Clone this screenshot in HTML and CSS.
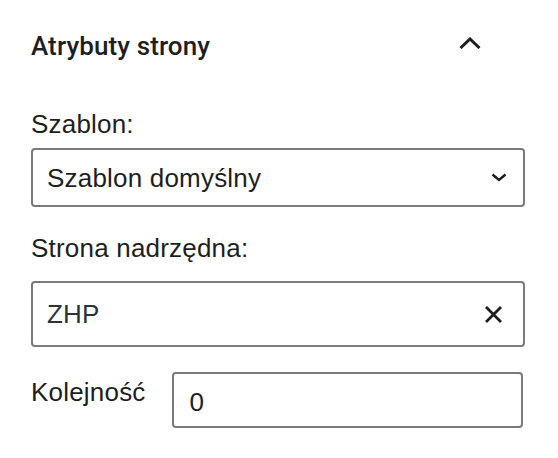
FILE: index.html
```html
<!DOCTYPE html>
<html lang="pl">
<head>
<meta charset="utf-8">
<title>Atrybuty strony</title>
<link rel="stylesheet" href="styles.css">
</head>
<body>
<section class="panel">
  <header class="panel-head">
    <h2 class="panel-title">Atrybuty strony</h2>
    <svg class="icon-up" width="22" height="12" viewBox="0 0 22 12" aria-hidden="true">
      <path d="M1.5 11 L11 2 L20.5 11" fill="none" stroke="#1e1e1e" stroke-width="3"/>
    </svg>
  </header>

  <div class="field">
    <label class="label">Szablon:</label>
    <div class="control select">
      <span class="value">Szablon domyślny</span>
      <svg class="icon-down" width="16" height="9" viewBox="0 0 16 9" aria-hidden="true">
        <path d="M1.5 1.5 L8 7 L14.5 1.5" fill="none" stroke="#1e1e1e" stroke-width="2.4"/>
      </svg>
    </div>
  </div>

  <div class="field field-parent">
    <label class="label">Strona nadrzędna:</label>
    <div class="control combo">
      <span class="value value-zhp">ZHP</span>
      <svg class="icon-x" width="19" height="19" viewBox="0 0 19 19" aria-hidden="true">
        <path d="M2 2 L17 17 M17 2 L2 17" fill="none" stroke="#1e1e1e" stroke-width="2.8"/>
      </svg>
    </div>
  </div>

  <div class="order-row">
    <label class="label order-label">Kolejność</label>
    <div class="control order-input">
      <span class="value">0</span>
    </div>
  </div>
</section>
</body>
</html>
```

FILE: styles.css
```css
* { box-sizing: border-box; }

body {
  margin: 0;
  background: #ffffff;
  font-family: "Liberation Sans", Arial, sans-serif;
  color: #1e1e1e;
}

.panel {
  width: 558px;
  padding: 0 33px 0 31px;
  display: flex;
  flex-direction: column;
}

.panel-head {
  height: 92px;
  display: flex;
  align-items: center;
  justify-content: space-between;
  padding-right: 44px;
}

.panel-title {
  margin: 0;
  font-family: Roboto, "Liberation Sans", sans-serif;
  font-size: 26px;
  font-weight: 500;
  line-height: 32px;
  color: #1e1e1e;
  letter-spacing: 0.1px;
}

.icon-up {
  display: block;
  margin-top: -6px;
}

.field {
  display: flex;
  flex-direction: column;
  gap: 8px;
  margin-top: 16px;
}

.field-parent {
  margin-top: 25px;
  gap: 17px;
}

.label {
  font-size: 26px;
  line-height: 32px;
  color: #1e1e1e;
  letter-spacing: 0.2px;
}

.control {
  border: 2px solid #7a7a7a;
  border-radius: 4px;
  display: flex;
  align-items: center;
  justify-content: space-between;
  background: #fff;
}

.select {
  height: 59px;
  padding: 0 16px 0 14px;
}

.combo {
  height: 66px;
  padding: 0 20px 0 14px;
}

.value {
  font-size: 26px;
  line-height: 32px;
  color: #1e1e1e;
  letter-spacing: 0.2px;
}

.value-zhp {
  color: #2c3338;
}

.order-row {
  display: flex;
  align-items: flex-start;
  gap: 26px;
  margin-top: 25px;
  padding-right: 2px;
}

.order-label {
  padding-top: 4px;
}

.order-input {
  flex: 1;
  height: 56px;
  padding: 0 16px 0 16px;
}

.order-input .value {
  padding-top: 4px;
}
```
